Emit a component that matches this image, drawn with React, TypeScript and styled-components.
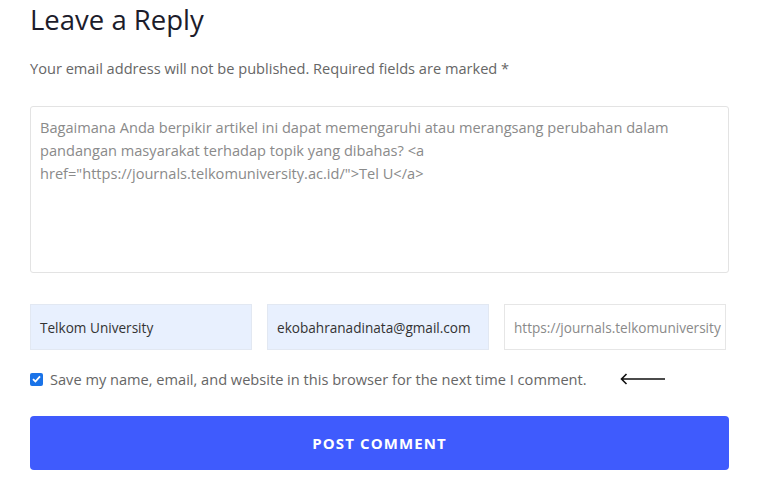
import React from 'react';
import styled, { createGlobalStyle } from 'styled-components';

const GlobalStyle = createGlobalStyle`
    html, body {
        margin: 0;
        padding: 0;
        background: #ffffff;
    }
    body {
        font-family: "Open Sans", "Noto Sans", sans-serif;
    }
`

const Wrapper = styled.div`
    width: 699px;
    padding: 0 0 0 30px;
`

const Title = styled.h3`
    margin: 0;
    padding-top: 3px;
    font-weight: 400;
    font-size: 27.5px;
    line-height: 34px;
    color: #1c1c2b;
`

const Notes = styled.p`
    margin: 21px 0 0 0;
    font-size: 14.6px;
    line-height: 20px;
    color: #666666;
`

const CommentBox = styled.div`
    box-sizing: border-box;
    margin-top: 28px;
    height: 167px;
    width: 699px;
    border: 1px solid #e3e3e3;
    border-radius: 3px;
    padding: 9px 9px;
    font-size: 14.6px;
    line-height: 23px;
    color: #8a8a8a;
    white-space: nowrap;
`

const FieldRow = styled.div`
    display: grid;
    grid-template-columns: 222px 222px 222px;
    column-gap: 15px;
    margin-top: 31px;
`

interface FieldProps {
    filled?: boolean;
}

const Field = styled.div<FieldProps>`
    box-sizing: border-box;
    height: 46px;
    display: flex;
    align-items: center;
    padding: 0 9px;
    overflow: hidden;
    white-space: nowrap;
    font-size: 13.6px;
    background: ${(p: FieldProps): string => (p.filled ? '#e8f0fe' : '#ffffff')};
    border: 1px solid ${(p: FieldProps): string => (p.filled ? '#e2e8f2' : '#e6e6e6')};
    color: ${(p: FieldProps): string => (p.filled ? '#333333' : '#8a8a8a')};
`

const ConsentRow = styled.div`
    display: flex;
    align-items: center;
    margin-top: 19px;
    height: 20px;
`

const Check = styled.span`
    width: 13px;
    height: 13px;
    border-radius: 2px;
    background: #1a73e8;
    display: flex;
    align-items: center;
    justify-content: center;
    margin-right: 7px;
`

const ConsentText = styled.span`
    font-size: 14.6px;
    color: #666666;
`

const Arrow = styled.svg`
    margin-left: 33px;
`

const PostButton = styled.div`
    margin-top: 27px;
    width: 699px;
    height: 54px;
    border-radius: 4px;
    background: #3f5bfd;
    color: #ffffff;
    display: flex;
    align-items: center;
    justify-content: center;
    font-weight: 700;
    font-size: 15px;
    letter-spacing: 1.1px;
`

export default function App() {
    return (
        <>
            <GlobalStyle />
            <Wrapper>
                <Title>Leave a Reply</Title>
                <Notes>Your email address will not be published. Required fields are marked *</Notes>
                <CommentBox>
                    Bagaimana Anda berpikir artikel ini dapat memengaruhi atau merangsang perubahan dalam
                    <br />
                    pandangan masyarakat terhadap topik yang dibahas? &lt;a
                    <br />
                    href="https://journals.telkomuniversity.ac.id/"&gt;Tel U&lt;/a&gt;
                </CommentBox>
                <FieldRow>
                    <Field filled>Telkom University</Field>
                    <Field filled>ekobahranadinata@gmail.com</Field>
                    <Field>https://journals.telkomuniversity</Field>
                </FieldRow>
                <ConsentRow>
                    <Check>
                        <svg width="9" height="8" viewBox="0 0 9 8">
                            <path d="M1 4.2 L3.4 6.5 L8 1.3" stroke="#fff" strokeWidth="1.8" fill="none" />
                        </svg>
                    </Check>
                    <ConsentText>Save my name, email, and website in this browser for the next time I comment.</ConsentText>
                    <Arrow width="46" height="12" viewBox="0 0 46 12">
                        <path d="M45 6 H1.5 M6.5 1 L1.5 6 L6.5 11" stroke="#111" strokeWidth="1.6" fill="none" />
                    </Arrow>
                </ConsentRow>
                <PostButton>POST COMMENT</PostButton>
            </Wrapper>
        </>
    );
}
